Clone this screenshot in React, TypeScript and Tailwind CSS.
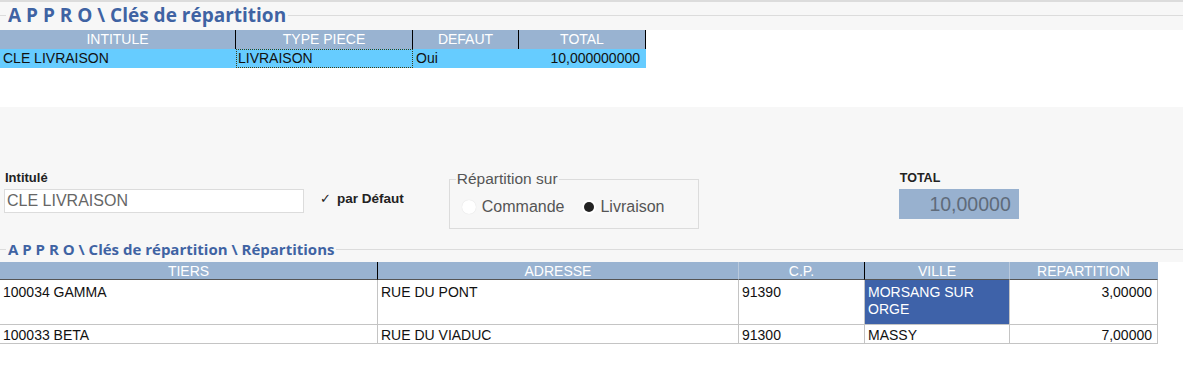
import React from "react";

const arial = { fontFamily: '"Liberation Sans", Arial, sans-serif' };
const open = { fontFamily: '"Open Sans", "Liberation Sans", sans-serif' };

function TitleRow({ text, size }: { text: string; size: string }) {
  return (
    <div className="flex items-center">
      <div className="h-px w-[6px] bg-[#dcdcdc]" />
      <div className={`px-[2px] font-bold text-[#3f63a3] ${size}`} style={open}>
        {text}
      </div>
      <div className="h-px flex-1 bg-[#dcdcdc]" />
    </div>
  );
}

export default function App() {
  const h1 = ["INTITULE", "TYPE PIECE", "DEFAUT", "TOTAL"];
  const h2 = ["TIERS", "ADRESSE", "C.P.", "VILLE", "REPARTITION"];
  return (
    <div className="w-[1183px] h-[376px] overflow-hidden bg-white text-[#111]" style={arial}>
      <div className="h-[2px] bg-[#dcdcdc]" />
      <div className="h-[28px] bg-[#f7f7f7]">
        <TitleRow text="A P P R O \ Clés de répartition" size="text-[19px] leading-[26px]" />
      </div>
      {/* Table 1 */}
      <div className="h-[77px] bg-white">
        <div className="grid w-[646px] grid-cols-[236px_177px_106px_127px] text-[14px]">
          {h1.map((h) => (
            <div
              key={h}
              className="h-[19px] border-r border-black bg-[#99b3d1] text-center leading-[19px] text-white"
            >
              {h}
            </div>
          ))}
          <div className="h-[19px] bg-[#66ccff] pl-[3px] leading-[19px]">CLE LIVRAISON</div>
          <div className="h-[19px] border border-dotted border-[#3c3c14] bg-[#66ccff] pl-[1px] leading-[17px]">
            LIVRAISON
          </div>
          <div className="h-[19px] bg-[#66ccff] pl-[3px] leading-[19px]">Oui</div>
          <div className="h-[19px] bg-[#66ccff] pr-[6px] text-right leading-[19px]">10,000000000</div>
        </div>
      </div>
      {/* Form */}
      <div className="h-[154px] bg-[#f7f7f7] pt-[61px]">
        <div className="flex items-start">
          <div className="ml-[4px] flex w-[300px] flex-col">
            <div className="h-[20px] pl-[1px] text-[13px] font-bold leading-[20px] text-[#222]">Intitulé</div>
            <div className="mt-[1px] h-[24px] border border-[#dcdcdc] bg-white pl-[2px] text-[16px] leading-[22px] text-[#666]">
              CLE LIVRAISON
            </div>
          </div>
          <div className="ml-[16px] mt-[21px] flex h-[20px] items-center text-[#222]">
            <span className="text-[13px] leading-[20px]">✓</span>
            <span className="ml-[6px] text-[13.5px] font-bold leading-[20px]">par Défaut</span>
          </div>
          <fieldset className="ml-[45px] mt-[2px] h-[59px] w-[250px] border border-[#dcdcdc] px-[6px]">
            <legend className="px-px text-[15.5px] leading-[18px] text-[#555]">Répartition sur</legend>
            <div className="mt-[9px] flex items-center text-[16px] leading-[20px] text-[#555]">
              <span className="ml-[6px] h-[14px] w-[14px] rounded-full bg-white shadow-[0_0_1px_rgba(0,0,0,0.15)]" />
              <span className="ml-[6px]">Commande</span>
              <span className="ml-[18px] flex h-[14px] w-[14px] items-center justify-center rounded-full bg-white">
                <span className="h-[10px] w-[10px] rounded-full bg-[#222]" />
              </span>
              <span className="ml-[4px]">Livraison</span>
            </div>
          </fieldset>
          <div className="ml-[200px] flex w-[120px] flex-col">
            <div className="h-[20px] pl-px text-[12.5px] font-bold leading-[20px] text-[#222]">TOTAL</div>
            <div className="mt-[1px] h-[30px] bg-[#98b1cf] pr-[8px] text-right text-[19.5px] leading-[30px] text-[#5f6b7a]">
              10,00000
            </div>
          </div>
        </div>
      </div>
      {/* Title 2 */}
      <div className="mt-[-22px] h-[23px] bg-[#f7f7f7]">
        <TitleRow text="A P P R O \ Clés de répartition \ Répartitions" size="text-[15px] leading-[20px]" />
      </div>
      {/* Table 2 */}
      <div className="bg-white">
        <div className="grid w-[1158px] grid-cols-[378px_361px_126px_145px_148px] text-[14px]">
          {h2.map((h, i) => (
            <div
              key={h}
              className={`h-[18px] border-b border-[#555] bg-[#99b3d1] text-center leading-[18px] text-white ${
                i === 0 || i === 2 ? "border-r border-r-black" : i === 4 ? "border-r border-r-[#99b3d1]" : "border-r border-r-[#b9c9dc]"
              }`}
            >
              {h}
            </div>
          ))}
          <div className="h-[45px] border-b border-r border-[#c4c4c4] pl-[3px] pt-[4px] leading-[17px]">100034 GAMMA</div>
          <div className="h-[45px] border-b border-r border-[#c4c4c4] pl-[3px] pt-[4px] leading-[17px]">RUE DU PONT</div>
          <div className="h-[45px] border-b border-r border-[#c4c4c4] pl-[3px] pt-[4px] leading-[17px]">91390</div>
          <div className="h-[45px] border-b border-r border-[#c4c4c4] bg-[#3e62a9] pl-[3px] pt-[4px] leading-[17px] text-white">
            MORSANG SUR
            <br />
            ORGE
          </div>
          <div className="h-[45px] border-b border-r border-[#c4c4c4] pr-[5px] pt-[4px] text-right leading-[17px]">3,00000</div>
          <div className="h-[19px] border-b border-r border-[#c4c4c4] pl-[3px] pt-[1px] leading-[18px]">100033 BETA</div>
          <div className="h-[19px] border-b border-r border-[#c4c4c4] pl-[3px] pt-[1px] leading-[18px]">RUE DU VIADUC</div>
          <div className="h-[19px] border-b border-r border-[#c4c4c4] pl-[3px] pt-[1px] leading-[18px]">91300</div>
          <div className="h-[19px] border-b border-r border-[#c4c4c4] pl-[3px] pt-[1px] leading-[18px]">MASSY</div>
          <div className="h-[19px] border-b border-r border-[#c4c4c4] pr-[5px] pt-[1px] text-right leading-[18px]">7,00000</div>
        </div>
      </div>
    </div>
  );
}
